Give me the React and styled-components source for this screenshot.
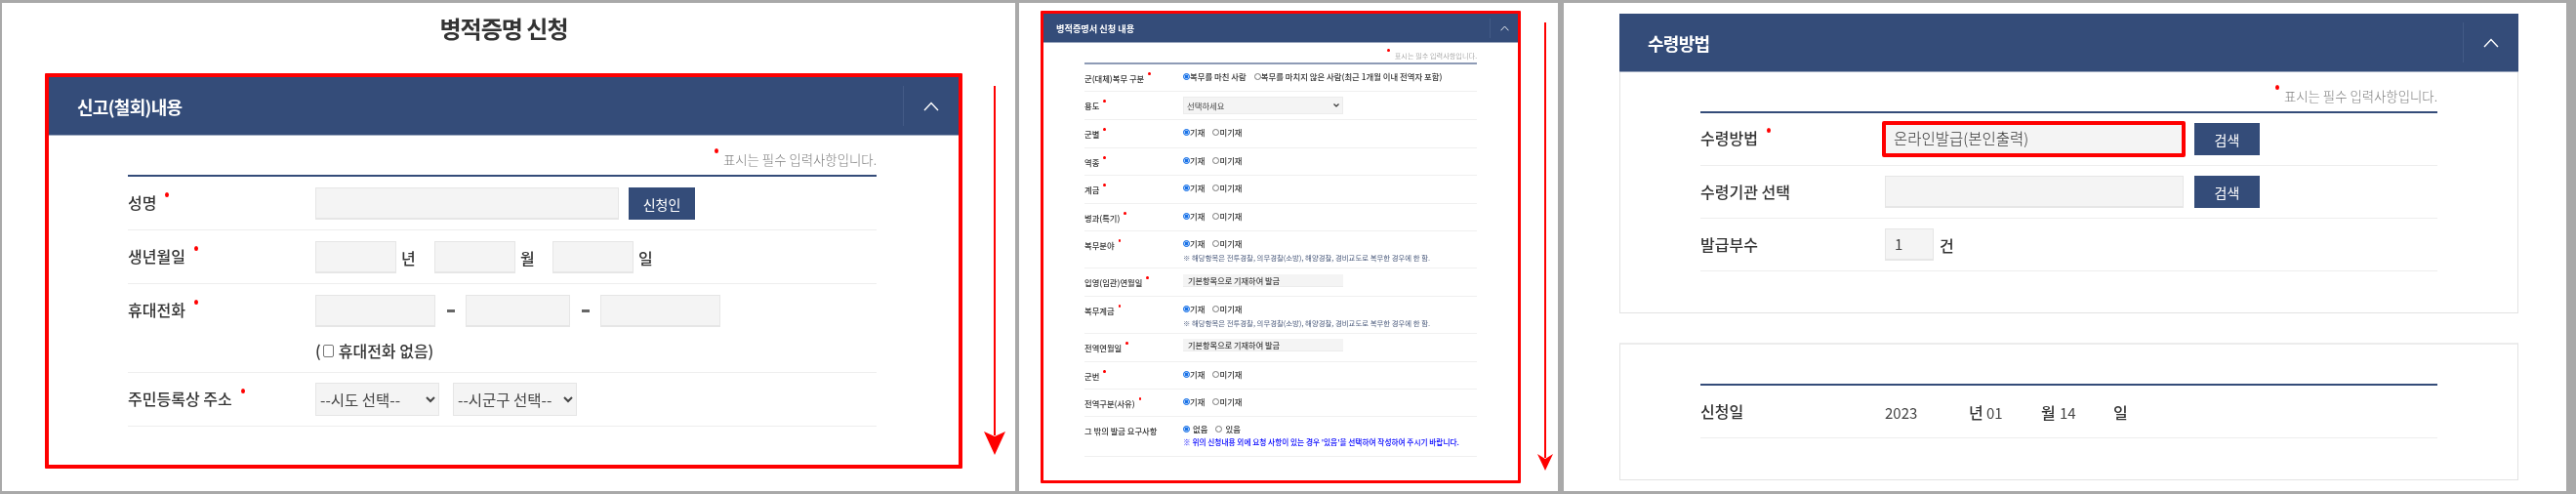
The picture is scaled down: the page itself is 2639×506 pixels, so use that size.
import React from "react";
import styled, { createGlobalStyle } from "styled-components";

const GlobalStyle = createGlobalStyle`
  html, body { margin: 0; padding: 0; background: #a9a9a9; }
  body { font-family: "Noto Sans CJK KR", "Noto Sans", sans-serif; color: #333; }
`;

const navy = "#344c79";

const Page = styled.div`
  width: 2639px;
  height: 506px;
  box-sizing: border-box;
  padding: 3px 9px 3px 2px;
  display: flex;
  gap: 4px;
  overflow: hidden;
  background: #a9a9a9;
  filter: blur(0.25px);
`;

const Panel = styled.div`
  position: relative;
  flex: 0 0 ${(p) => p.$w}px;
  min-width: 0;
  height: 500px;
  box-sizing: border-box;
  background: #fff;
  padding: ${(p) => p.$pad};
  margin-left: ${(p) => p.$ml || 0}px;
`;

const PageTitle = styled.h1`
  height: 72px;
  margin: 0;
  padding: 8px 0 0 0;
  box-sizing: border-box;
  font-size: 24px;
  line-height: 36px;
  font-weight: 700;
  letter-spacing: -1px;
  text-align: center;
  color: #333;
  width: 940px;
`;

const RedBox = styled.section`
  box-sizing: border-box;
  width: ${(p) => p.$w}px;
  height: ${(p) => p.$h}px;
  border: ${(p) => p.$t}px solid #fe0000;
  border-radius: 1px;
  background: #fff;
`;

const Section = styled.section`
  box-sizing: border-box;
  width: 921px;
  height: ${(p) => p.$h}px;
  border: 1px solid #e3e3e3;
  border-top: ${(p) => (p.$plain ? "2px solid #ececec" : "0")};
  margin-bottom: 30px;
  background: #fff;
`;

const Header = styled.header`
  box-sizing: border-box;
  height: ${(p) => (p.$small ? 30 : 60)}px;
  margin: ${(p) => (p.$flush ? "0 -1px" : "0")};
  display: flex;
  align-items: center;
  justify-content: space-between;
  background: ${navy};
  border-bottom: 1px solid #9aa6bd;
  padding-left: ${(p) => (p.$small ? 13 : 29)}px;
`;

const HeaderTitle = styled.h2`
  margin: 0;
  color: #fff;
  font-size: ${(p) => (p.$small ? 9.2 : 18)}px;
  font-weight: 700;
  letter-spacing: ${(p) => (p.$small ? 0 : -0.7)}px;
`;

const Toggle = styled.div`
  box-sizing: border-box;
  height: ${(p) => (p.$small ? 20 : 41)}px;
  width: ${(p) => (p.$small ? 29 : 57)}px;
  display: flex;
  align-items: center;
  justify-content: center;
  border-left: 1px solid #435a86;
  svg { display: block; }
`;

const Chevron = ({ small }) => (
  <svg width={small ? 9 : 16} height={small ? 6 : 10} viewBox="0 0 16 10" fill="none">
    <polyline points="1,9 8,1.5 15,9" stroke="#fff" strokeWidth={small ? 1.6 : 1.4} />
  </svg>
);

const Form = styled.div`
  width: ${(p) => p.$w}px;
  margin-left: ${(p) => p.$ml}px;
`;

const Note = styled.p`
  box-sizing: border-box;
  margin: 0;
  height: ${(p) => (p.$small ? 22 : 42)}px;
  padding-top: ${(p) => (p.$small ? 6 : 13)}px;
  border-bottom: 2px solid ${(p) => p.$rule || navy};
  font-size: ${(p) => (p.$small ? 7.2 : 13.4)}px;
  line-height: ${(p) => (p.$small ? 12 : 20)}px;
  font-weight: 300;
  color: #7d7d7d;
  text-align: right;
`;

const Dot = styled.i`
  display: inline-block;
  width: ${(p) => (p.$small ? 2.5 : 4)}px;
  height: ${(p) => (p.$small ? 3 : 5)}px;
  border-radius: 50%;
  background: #f00;
  margin: 0 ${(p) => (p.$note ? 5 : 0)}px 0 ${(p) => (p.$note ? 0 : p.$small ? 4 : 9)}px;
  vertical-align: ${(p) => (p.$small ? 7 : 12)}px;
`;

const Row = styled.div`
  box-sizing: border-box;
  height: ${(p) => p.$h}px;
  display: grid;
  grid-template-columns: ${(p) => p.$col}px 1fr;
  align-items: start;
  border-bottom: 1px solid #eeeeee;
`;

const Label = styled.div`
  font-size: 16px;
  line-height: 24px;
  font-weight: 500;
  color: #333;
  padding-top: ${(p) => p.$top ?? 14}px;
  white-space: nowrap;
`;

const Value = styled.div`
  display: flex;
  flex-wrap: wrap;
  align-items: center;
  gap: ${(p) => p.$gap ?? 10}px;
  padding-top: ${(p) => p.$top ?? 11}px;
  font-size: 16px;
  font-weight: 500;
`;

const Field = styled.div`
  box-sizing: border-box;
  width: ${(p) => p.$w}px;
  height: ${(p) => p.$h || 33}px;
  background: #f4f4f4;
  border: 1px solid #e6e6e6;
  border-bottom-width: 2px;
  padding-left: 9px;
  font-size: 15px;
  font-weight: 400;
  line-height: ${(p) => (p.$h || 33) - 4}px;
  color: #444;
`;

const HighlightBox = styled.div`
  box-sizing: border-box;
  width: 311px;
  height: 37px;
  margin: -3px -2px -3px -3px;
  border: 4px solid #fe0000;
  border-radius: 2px;
  background: #f4f4f4;
  padding-left: 8px;
  font-size: 15.5px;
  font-weight: 300;
  line-height: 27px;
  color: #333;
`;

const Unit = styled.span`
  width: ${(p) => p.$w}px;
  font-size: 16px;
  font-weight: 500;
  color: #333;
`;

const Dash = styled.span`
  width: 11px;
  height: 3px;
  display: flex;
  justify-content: center;
  &::before { content: ""; width: 8px; height: 3px; background: #666; }
`;

const ActionButton = styled.button`
  box-sizing: border-box;
  width: ${(p) => p.$w}px;
  height: 33px;
  border: 0;
  padding: 0;
  background: ${navy};
  color: #fff;
  font: 400 14px "Noto Sans CJK KR", sans-serif;
`;

const PhoneLine = styled.label`
  flex: 0 0 100%;
  display: flex;
  align-items: center;
  height: 24px;
  margin-top: 2px;
  font-size: 16px;
  font-weight: 500;
  color: #333;
  input {
    appearance: none;
    box-sizing: border-box;
    width: 11px;
    height: 13px;
    margin: 0 5px 0 2px;
    border: 1px solid #767676;
    border-radius: 2px;
    background: #fff;
  }
`;

const NativeSelect = styled.select`
  box-sizing: border-box;
  width: 127px;
  height: 34px;
  padding: 0;
  background: #f4f4f4;
  border: 1px solid #e6e6e6;
  border-radius: 0;
  font: 400 15.5px "Noto Sans CJK KR", sans-serif;
  color: #444;
  outline: none;
`;

/* compact panel, scaled down in the screenshot */
const MiniRow = styled(Row)`
  border-bottom-color: #f0f0f0;
`;

const MiniLabel = styled.div`
  font-size: 8.3px;
  line-height: 12px;
  font-weight: 500;
  padding-top: 8px;
  color: #333;
  white-space: nowrap;
`;

const MiniValue = styled.div`
  padding-top: ${(p) => p.$top ?? 6}px;
  font-size: 8.4px;
  font-weight: 500;
  line-height: 12px;
  color: #333;
`;

const RadioLine = styled.div`
  display: flex;
  align-items: center;
  height: 12px;
`;

const RadioItem = styled.label`
  display: inline-flex;
  align-items: center;
  margin-right: ${(p) => p.$mr ?? 7}px;
  white-space: nowrap;
  input {
    appearance: none;
    box-sizing: border-box;
    width: 7px;
    height: 7px;
    margin: 1px ${(p) => p.$gap ?? 0}px 0 0;
    border: 0.7px solid #777;
    border-radius: 50%;
    background: #fff;
  }
  input:checked {
    border-color: #1a73e8;
    background: #1a73e8;
    box-shadow: inset 0 0 0 0.6px #fff;
  }
`;

const MiniHint = styled.p`
  margin: 4px 0 0;
  font-size: 7.4px;
  line-height: 10px;
  font-weight: 400;
  color: #4a5a7c;
  white-space: nowrap;
`;

const BlueHint = styled(MiniHint)`
  margin-top: 3px;
  color: #0000ff;
  font-weight: 500;
  font-size: 7.7px;
`;

const MiniSelect = styled.select`
  box-sizing: border-box;
  display: block;
  width: 164px;
  height: 18px;
  padding: 0 0 0 3px;
  appearance: none;
  background-color: #f4f4f4;
  background-image: url("data:image/svg+xml,%3Csvg xmlns='http://www.w3.org/2000/svg' width='6' height='4'%3E%3Cpolyline points='0.5,0.5 3,3 5.5,0.5' fill='none' stroke='%23333' stroke-width='1.2'/%3E%3C/svg%3E");
  background-repeat: no-repeat;
  background-position: right 3px center;
  border: 1px solid #ececec;
  border-radius: 0;
  font: 400 8.4px "Noto Sans CJK KR", sans-serif;
  color: #444;
`;

const MiniField = styled.div`
  box-sizing: border-box;
  width: 164px;
  height: 13px;
  padding-left: 5px;
  background: #f4f4f4;
  border-bottom: 1px solid #ececec;
  font-size: 8.2px;
  line-height: 12px;
  color: #444;
`;

const BlurWrap = styled.div`
  filter: blur(0.3px);
  height: 100%;
`;

const ArrowHolder = styled.div`
  position: absolute;
  left: ${(p) => p.$x}px;
  top: ${(p) => p.$y}px;
  svg { display: block; }
`;

const DateText = styled.span`
  width: ${(p) => p.$w}px;
  font-size: 15px;
  font-weight: 400;
  color: #444;
`;

const DownArrow = ({ w, h, head, line }) => (
  <svg width={w} height={h} viewBox={`0 0 ${w} ${h}`}>
    <rect x={w / 2 - line / 2} y="0" width={line} height={h - head + 4} fill="#fe0000" />
    <polygon points={`0,${h - head} ${w / 2},${h - head + 5} ${w},${h - head} ${w / 2},${h}`} fill="#fe0000" />
  </svg>
);

const yesNo = [
  { label: "군별", h: 29 },
  { label: "역종", h: 28 },
  { label: "계급", h: 29 },
  { label: "병과(특기)", h: 28 },
];

const YesNo = ({ name }) => (
  <RadioLine>
    <RadioItem $mr={8}>
      <input type="radio" name={name} defaultChecked />
      기재
    </RadioItem>
    <RadioItem>
      <input type="radio" name={name} />
      미기재
    </RadioItem>
  </RadioLine>
);

const HINT = "※ 해당항목은 전투경찰, 의무경찰(소방), 해양경찰, 경비교도로 복무한 경우에 한 함.";

function ApplyPanel() {
  return (
    <Panel $w={1038} $pad="0 0 0 44px">
      <PageTitle>병적증명 신청</PageTitle>
      <RedBox $w={940} $h={405} $t={4}>
        <Header>
          <HeaderTitle>신고(철회)내용</HeaderTitle>
          <Toggle><Chevron /></Toggle>
        </Header>
        <Form $w={767} $ml={81}>
          <Note><Dot $note />표시는 필수 입력사항입니다.</Note>
          <Row $h={55} $col={192}>
            <Label>성명<Dot /></Label>
            <Value>
              <Field $w={311} />
              <ActionButton $w={68}>신청인</ActionButton>
            </Value>
          </Row>
          <Row $h={55} $col={192}>
            <Label>생년월일<Dot /></Label>
            <Value $gap={5}>
              <Field $w={83} />
              <Unit $w={29}>년</Unit>
              <Field $w={83} />
              <Unit $w={28}>월</Unit>
              <Field $w={83} />
              <Unit $w={20}>일</Unit>
            </Value>
          </Row>
          <Row $h={91} $col={192}>
            <Label>휴대전화<Dot /></Label>
            <Value $gap={10}>
              <Field $w={123} />
              <Dash />
              <Field $w={107} />
              <Dash />
              <Field $w={123} />
              <PhoneLine>(<input type="checkbox" />휴대전화 없음)</PhoneLine>
            </Value>
          </Row>
          <Row $h={55} $col={192}>
            <Label>주민등록상 주소<Dot /></Label>
            <Value $gap={14} $top={10}>
              <NativeSelect><option>--시도 선택--</option></NativeSelect>
              <NativeSelect><option>--시군구 선택--</option></NativeSelect>
            </Value>
          </Row>
        </Form>
      </RedBox>
      <ArrowHolder $x={1006} $y={85}>
        <DownArrow w={22} h={378} head={24} line={2} />
      </ArrowHolder>
    </Panel>
  );
}

function DetailPanel() {
  return (
    <Panel $w={552} $pad="8px 0 0 22px">
      <BlurWrap>
        <RedBox $w={492} $h={484} $t={3}>
          <Header $small>
            <HeaderTitle $small>병적증명서 신청 내용</HeaderTitle>
            <Toggle $small><Chevron small /></Toggle>
          </Header>
          <Form $w={402} $ml={42}>
            <Note $small $rule="#8e9bb6"><Dot $small $note />표시는 필수 입력사항입니다.</Note>
            <MiniRow $h={28} $col={101}>
              <MiniLabel>군(대체)복무 구분<Dot $small /></MiniLabel>
              <MiniValue>
                <RadioLine>
                  <RadioItem $mr={8}>
                    <input type="radio" name="svc" defaultChecked />
                    복무를 마친 사람
                  </RadioItem>
                  <RadioItem>
                    <input type="radio" name="svc" />
                    복무를 마치지 않은 사람(최근 1개월 이내 전역자 포함)
                  </RadioItem>
                </RadioLine>
              </MiniValue>
            </MiniRow>
            <MiniRow $h={29} $col={101}>
              <MiniLabel>용도<Dot $small /></MiniLabel>
              <MiniValue $top={5}>
                <MiniSelect><option>선택하세요</option></MiniSelect>
              </MiniValue>
            </MiniRow>
            {yesNo.map((r) => (
              <MiniRow key={r.label} $h={r.h} $col={101}>
                <MiniLabel>{r.label}<Dot $small /></MiniLabel>
                <MiniValue><YesNo name={r.label} /></MiniValue>
              </MiniRow>
            ))}
            <MiniRow $h={38} $col={101}>
              <MiniLabel>복무분야<Dot $small /></MiniLabel>
              <MiniValue><YesNo name="field" /><MiniHint>{HINT}</MiniHint></MiniValue>
            </MiniRow>
            <MiniRow $h={29} $col={101}>
              <MiniLabel>입영(임관)연월일<Dot $small /></MiniLabel>
              <MiniValue $top={6}><MiniField>기본항목으로 기재하여 발급</MiniField></MiniValue>
            </MiniRow>
            <MiniRow $h={38} $col={101}>
              <MiniLabel>복무계급<Dot $small /></MiniLabel>
              <MiniValue><YesNo name="rank" /><MiniHint>{HINT}</MiniHint></MiniValue>
            </MiniRow>
            <MiniRow $h={29} $col={101}>
              <MiniLabel>전역연월일<Dot $small /></MiniLabel>
              <MiniValue $top={5}><MiniField>기본항목으로 기재하여 발급</MiniField></MiniValue>
            </MiniRow>
            <MiniRow $h={28} $col={101}>
              <MiniLabel>군번<Dot $small /></MiniLabel>
              <MiniValue><YesNo name="num" /></MiniValue>
            </MiniRow>
            <MiniRow $h={28} $col={101}>
              <MiniLabel>전역구분(사유)<Dot $small /></MiniLabel>
              <MiniValue><YesNo name="reason" /></MiniValue>
            </MiniRow>
            <MiniRow $h={41} $col={101}>
              <MiniLabel>그 밖의 발급 요구사항</MiniLabel>
              <MiniValue>
                <RadioLine>
                  <RadioItem $mr={8} $gap={3}>
                    <input type="radio" name="etc" defaultChecked />
                    없음
                  </RadioItem>
                  <RadioItem $gap={3}>
                    <input type="radio" name="etc" />
                    있음
                  </RadioItem>
                </RadioLine>
                <BlueHint>※ 위의 신청내용 외에 요청 사항이 있는 경우 '있음'을 선택하여 작성하여 주시기 바랍니다.</BlueHint>
              </MiniValue>
            </MiniRow>
          </Form>
        </RedBox>
      </BlurWrap>
      <ArrowHolder $x={531} $y={20}>
        <DownArrow w={16} h={459} head={17} line={2} />
      </ArrowHolder>
    </Panel>
  );
}

function ReceivePanel() {
  return (
    <Panel $w={1027} $ml={2} $pad="11px 0 0 57px">
      <Section $h={307}>
        <Header $flush>
          <HeaderTitle>수령방법</HeaderTitle>
          <Toggle><Chevron /></Toggle>
        </Header>
        <Form $w={755} $ml={82}>
          <Note><Dot $note />표시는 필수 입력사항입니다.</Note>
          <Row $h={54} $col={189}>
            <Label $top={13}>수령방법<Dot /></Label>
            <Value $gap={11} $top={10}>
              <HighlightBox>온라인발급(본인출력)</HighlightBox>
              <ActionButton $w={67}>검색</ActionButton>
            </Value>
          </Row>
          <Row $h={54} $col={189}>
            <Label $top={14}>수령기관 선택</Label>
            <Value $gap={11} $top={10}>
              <Field $w={306} />
              <ActionButton $w={67}>검색</ActionButton>
            </Value>
          </Row>
          <Row $h={54} $col={189}>
            <Label $top={14}>발급부수</Label>
            <Value $gap={6} $top={10}>
              <Field $w={50}>1</Field>
              <Unit $w={20}>건</Unit>
            </Value>
          </Row>
        </Form>
      </Section>
      <Section $h={141} $plain>
        <Form $w={755} $ml={82}>
          <Note />
          <Row $h={54} $col={189}>
            <Label $top={14}>신청일</Label>
            <Value $gap={0} $top={15}>
              <DateText $w={86}>2023</DateText>
              <Unit $w={18}>년</Unit>
              <DateText $w={56}>01</DateText>
              <Unit $w={19}>월</Unit>
              <DateText $w={55}>14</DateText>
              <Unit $w={20}>일</Unit>
            </Value>
          </Row>
        </Form>
      </Section>
    </Panel>
  );
}

export default function App() {
  return (
    <>
      <GlobalStyle />
      <Page>
        <ApplyPanel />
        <DetailPanel />
        <ReceivePanel />
      </Page>
    </>
  );
}
